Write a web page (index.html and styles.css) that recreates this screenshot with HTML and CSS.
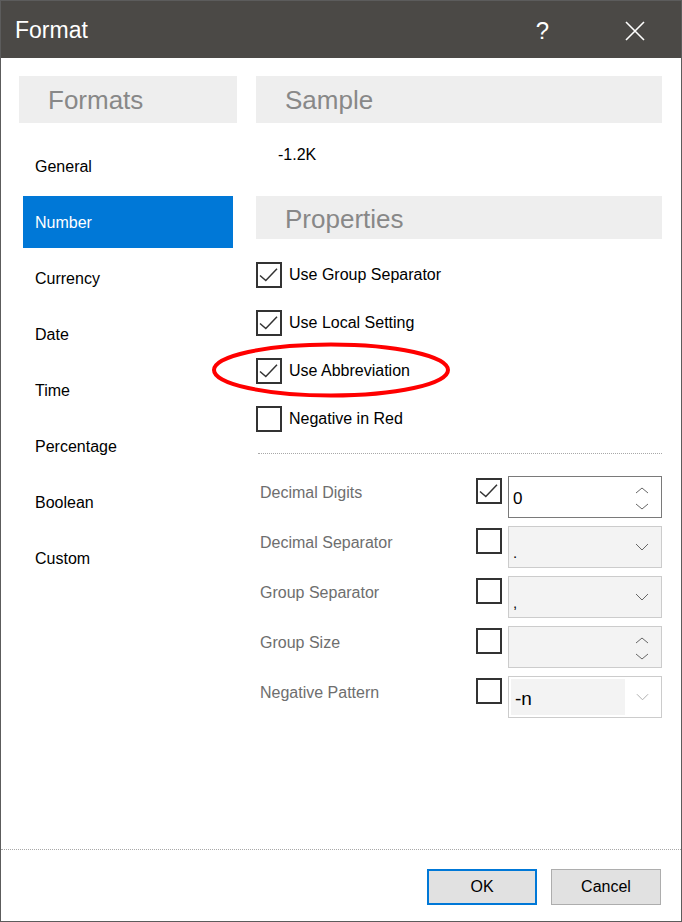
FILE: index.html
```html
<!DOCTYPE html>
<html lang="en">
<head>
    <meta charset="UTF-8">
    <meta name="viewport" content="width=device-width, initial-scale=1.0">
    <title>Format</title>
    <link rel="stylesheet" href="styles.css">
</head>
<body>
    <div class="dialog">
        <div class="titlebar">
            <span class="title">Format</span>
            <span class="help">?</span>
            <svg class="close" width="22" height="22" viewBox="0 0 22 22">
                <path d="M2 2 L20 20 M20 2 L2 20" stroke="#fff" stroke-width="1.6" fill="none"/>
            </svg>
        </div>

        <div class="main">
            <div class="col-left">
                <div class="header">Formats</div>
                <ul class="format-list">
                    <li>General</li>
                    <li class="selected">Number</li>
                    <li>Currency</li>
                    <li>Date</li>
                    <li>Time</li>
                    <li>Percentage</li>
                    <li>Boolean</li>
                    <li>Custom</li>
                </ul>
            </div>

            <div class="col-right">
                <div class="header">Sample</div>
                <div class="sample">-1.2K</div>

                <div class="header header-small">Properties</div>
                <div class="options">
                    <div class="option">
                        <span class="check"><svg width="22" height="22" viewBox="0 0 22 22"><path d="M2 11.5 L7.8 16.5 L19 4.8" stroke="#333" stroke-width="1.5" fill="none"/></svg></span>
                        Use Group Separator
                    </div>
                    <div class="option">
                        <span class="check"><svg width="22" height="22" viewBox="0 0 22 22"><path d="M2 11.5 L7.8 16.5 L19 4.8" stroke="#333" stroke-width="1.5" fill="none"/></svg></span>
                        Use Local Setting
                    </div>
                    <div class="option">
                        <span class="check"><svg width="22" height="22" viewBox="0 0 22 22"><path d="M2 11.5 L7.8 16.5 L19 4.8" stroke="#333" stroke-width="1.5" fill="none"/></svg></span>
                        Use Abbreviation
                    </div>
                    <div class="option"><span class="check"></span>Negative in Red</div>
                </div>

                <div class="sep"></div>

                <div class="fields">
                    <div class="field">
                        <span class="field-label">Decimal Digits</span>
                        <span class="check"><svg width="22" height="22" viewBox="0 0 22 22"><path d="M2 11.5 L7.8 16.5 L19 4.8" stroke="#333" stroke-width="1.5" fill="none"/></svg></span>
                        <div class="box box-active">
                            <span class="value">0</span>
                            <span class="spin">
                                <svg width="14" height="7" viewBox="0 0 14 7"><path d="M1 6 L7 1 L13 6" stroke="#666" fill="none"/></svg>
                                <svg width="14" height="7" viewBox="0 0 14 7"><path d="M1 1 L7 6 L13 1" stroke="#666" fill="none"/></svg>
                            </span>
                        </div>
                    </div>
                    <div class="field">
                        <span class="field-label">Decimal Separator</span>
                        <span class="check"></span>
                        <div class="box box-off">
                            <span class="value small">.</span>
                            <svg class="drop" width="14" height="8" viewBox="0 0 14 8"><path d="M1 1 L7 7 L13 1" stroke="#666" fill="none"/></svg>
                        </div>
                    </div>
                    <div class="field">
                        <span class="field-label">Group Separator</span>
                        <span class="check"></span>
                        <div class="box box-off">
                            <span class="value small">,</span>
                            <svg class="drop" width="14" height="8" viewBox="0 0 14 8"><path d="M1 1 L7 7 L13 1" stroke="#666" fill="none"/></svg>
                        </div>
                    </div>
                    <div class="field">
                        <span class="field-label">Group Size</span>
                        <span class="check"></span>
                        <div class="box box-off">
                            <span class="value"></span>
                            <span class="spin">
                                <svg width="14" height="7" viewBox="0 0 14 7"><path d="M1 6 L7 1 L13 6" stroke="#666" fill="none"/></svg>
                                <svg width="14" height="7" viewBox="0 0 14 7"><path d="M1 1 L7 6 L13 1" stroke="#666" fill="none"/></svg>
                            </span>
                        </div>
                    </div>
                    <div class="field">
                        <span class="field-label">Negative Pattern</span>
                        <span class="check"></span>
                        <div class="box box-select">
                            <span class="select-inner">-n</span>
                            <svg class="drop" width="14" height="8" viewBox="0 0 14 8"><path d="M1 1 L7 7 L13 1" stroke="#aaa" fill="none"/></svg>
                        </div>
                    </div>
                </div>
            </div>
        </div>

        <div class="footer">
            <button class="btn btn-ok">OK</button>
            <button class="btn">Cancel</button>
        </div>

        <!-- marca vermelha por cima da opção -->
        <svg class="mark" width="246" height="62" viewBox="0 0 246 62">
            <ellipse cx="122" cy="29" rx="117" ry="25.5" stroke="#f00" stroke-width="4" fill="none"/>
        </svg>
    </div>
</body>
</html>
```

FILE: styles.css
```css
* {
    margin: 0;
    padding: 0;
    box-sizing: border-box;
}

body {
    font-family: "Liberation Sans", Arial, sans-serif;
    background-color: #fff;
    color: #000;
}

.dialog {
    position: relative;
    width: 682px;
    height: 922px;
    border: 1px solid #5c5c5c;
    display: flex;
    flex-direction: column;
    background-color: #fff;
}

.titlebar {
    height: 57px;
    background-color: #4b4946;
    color: #fff;
    display: flex;
    align-items: center;
    padding-left: 14px;
    padding-top: 2px;
    flex-shrink: 0;
}

.title {
    font-size: 23px;
    flex: 1;
}

.help {
    font-size: 24px;
    margin-right: 75px;
}

.close {
    margin-right: 35px;
}

.main {
    flex: 1;
    display: flex;
    gap: 19px;
    padding: 18px 19px 0 18px;
}

.col-left {
    width: 218px;
}

.col-right {
    flex: 1;
}

.header {
    background-color: #eeeeee;
    color: #888;
    font-size: 26px;
    height: 47px;
    line-height: 48px;
    padding-left: 29px;
}

.header-small {
    height: 43px;
    line-height: 46px;
}

.format-list {
    list-style: none;
    padding: 17px 4px 0 4px;
    display: flex;
    flex-direction: column;
    gap: 4px;
}

.format-list li {
    height: 52px;
    line-height: 53px;
    padding-left: 12px;
    font-size: 16px;
}

.format-list li.selected {
    background-color: #0078d7;
    color: #fff;
}

.sample {
    height: 73px;
    padding: 23px 0 0 22px;
    font-size: 16px;
    line-height: 18px;
}

.options {
    padding-top: 11px;
}

.option {
    height: 48px;
    display: flex;
    align-items: center;
    gap: 7px;
    font-size: 16px;
    padding-top: 1px;
}

.check {
    width: 26px;
    height: 26px;
    border: 2px solid #333;
    flex-shrink: 0;
}

.check svg {
    display: block;
}

.sep {
    margin: 11px 0 0 2px;
    border-top: 1px dotted #a8a8a8;
}

.fields {
    padding-top: 22px;
}

.field {
    height: 50px;
    display: flex;
    align-items: flex-start;
    gap: 7px;
}

.field-label {
    flex: 1;
    padding: 8px 0 0 4px;
    font-size: 16px;
    color: #6e6e6e;
}

.field .check {
    margin: 2px -1px 0 0;
}

.box {
    width: 154px;
    height: 42px;
    border: 1px solid #cccccc;
    display: flex;
    align-items: center;
    padding: 0 12px 0 4px;
}

.box-active {
    border-color: #7a7a7a;
    background-color: #fff;
}

.box-off {
    background-color: #f3f3f3;
}

.value {
    flex: 1;
    font-size: 17px;
    padding-top: 4px;
}

.value.small {
    font-size: 15px;
    padding-top: 10px;
}

.spin {
    display: flex;
    flex-direction: column;
    gap: 9px;
    padding-top: 2px;
}

.spin svg {
    display: block;
}

.drop {
    display: block;
}

.box-select {
    background-color: #fff;
    padding: 2px 12px 2px 2px;
}

.box-select .select-inner {
    align-self: stretch;
    width: 114px;
    flex-shrink: 0;
    margin-right: 11px;
    background-color: #f3f3f3;
    font-size: 19px;
    line-height: 40px;
    padding-left: 4px;
}

.footer {
    height: 72px;
    border-top: 1px dotted #a8a8a8;
    display: flex;
    justify-content: flex-end;
    align-items: flex-start;
    gap: 14px;
    padding: 19px 20px 0 0;
    flex-shrink: 0;
}

.btn {
    width: 110px;
    height: 36px;
    background-color: #e1e1e1;
    border: 1px solid #adadad;
    font-family: "Liberation Sans", Arial, sans-serif;
    font-size: 16px;
    color: #000;
}

.btn-ok {
    border: 2px solid #0078d7;
}

.mark {
    position: absolute;
    left: 208px;
    top: 340px;
}
```
